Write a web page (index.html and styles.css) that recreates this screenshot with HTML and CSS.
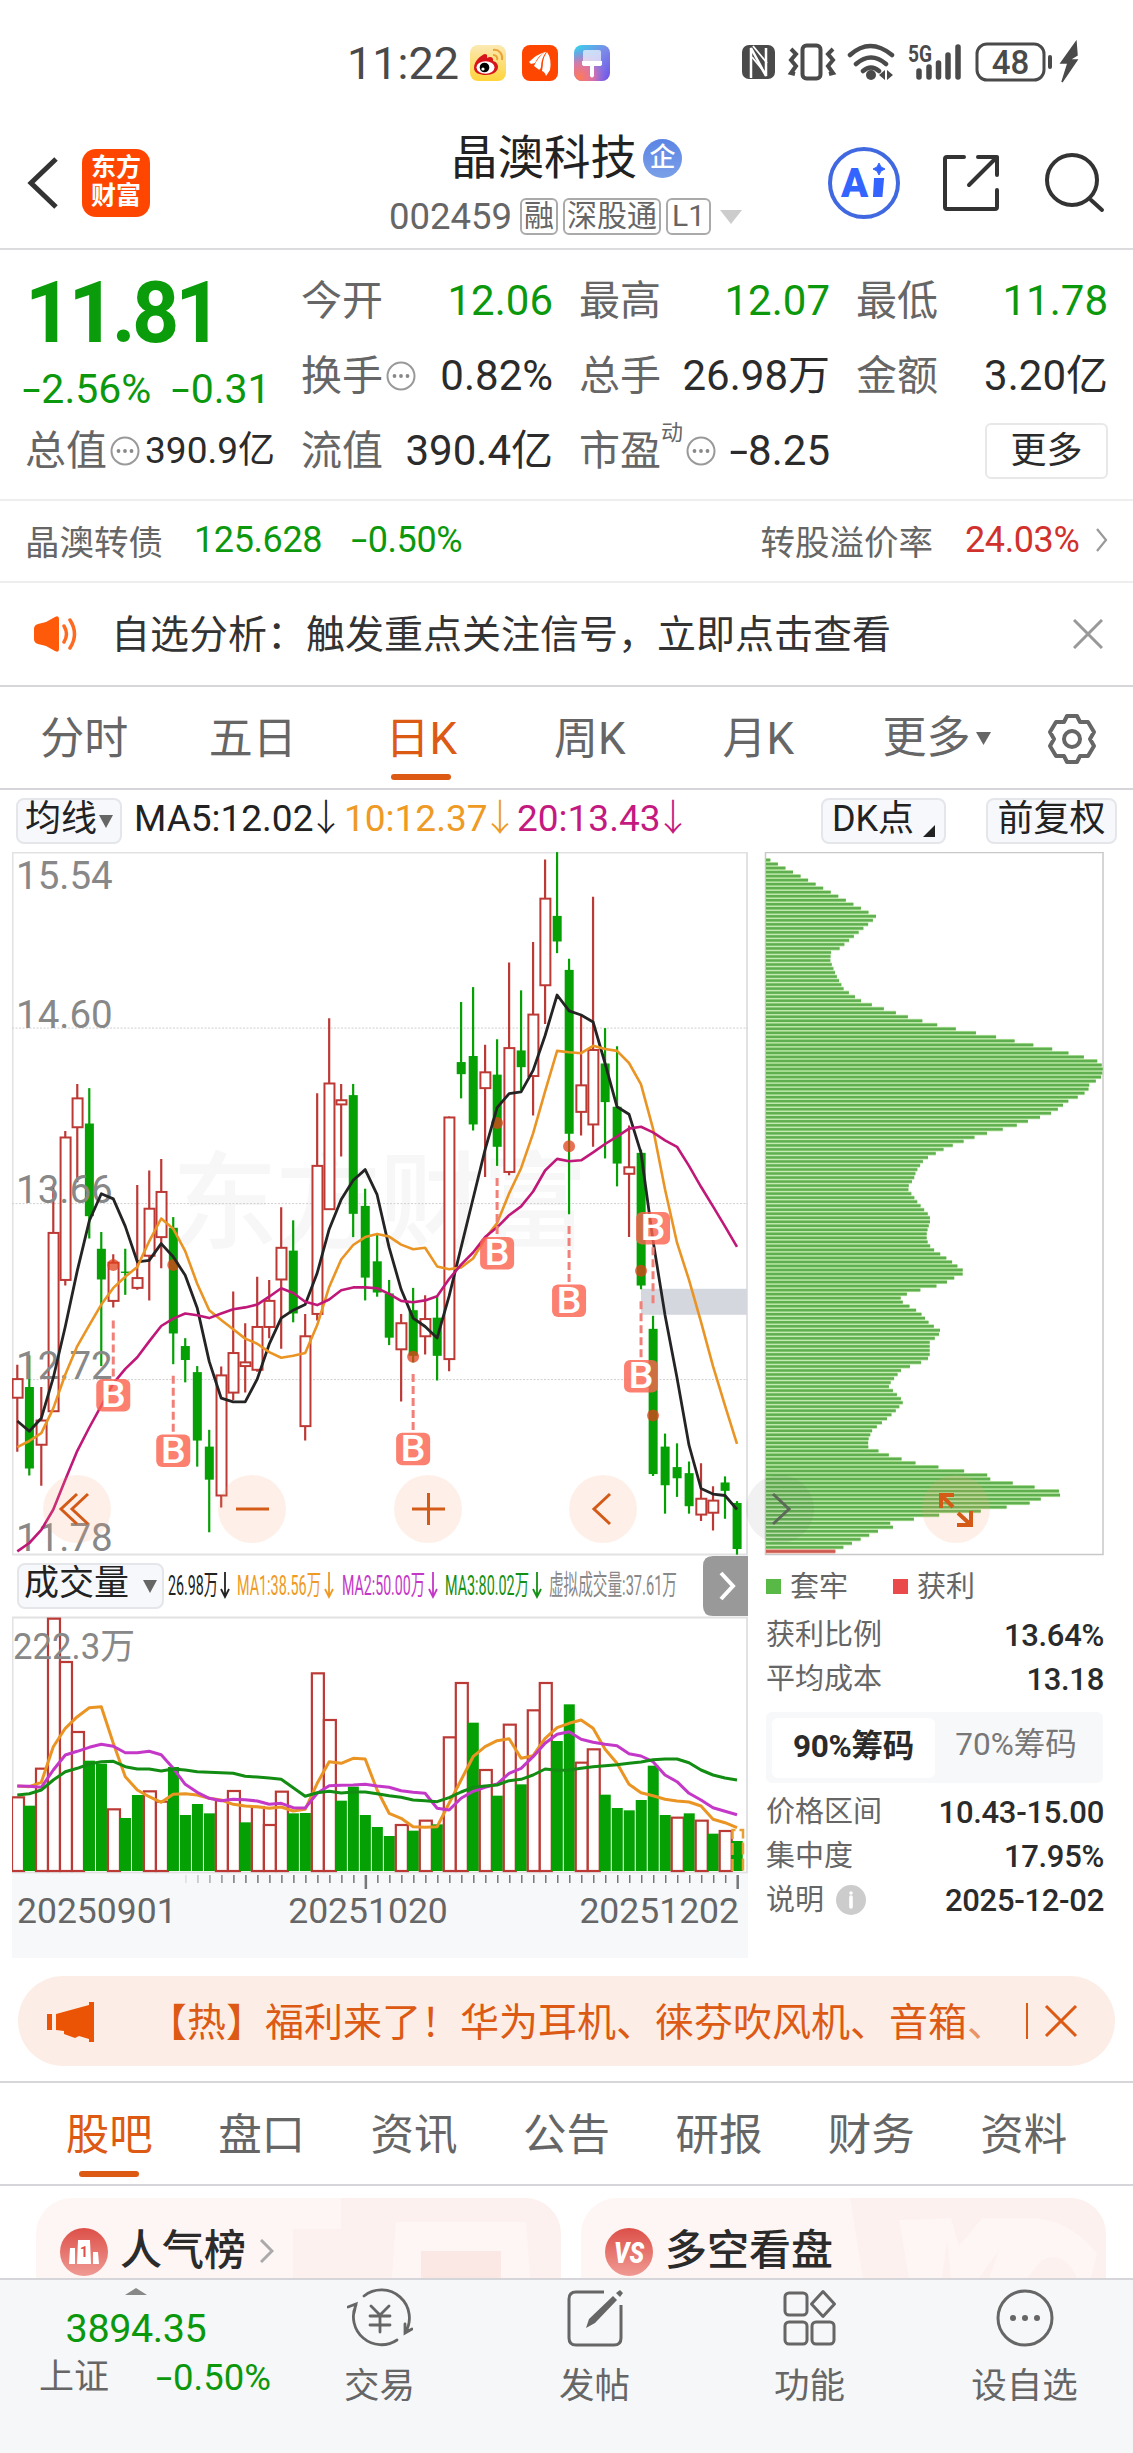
FILE: index.html
```html
<!DOCTYPE html>
<html lang="zh-CN">
<head>
<meta charset="utf-8">
<title>晶澳科技 002459</title>
<link rel="stylesheet" href="styles.css">
</head>
<body>
<div class="status">
  <span class="clock">11:22</span>
  <svg class="app" viewBox="0 0 36 36"><defs><linearGradient id="gy" x2="0" y2="1"><stop offset="0" stop-color="#fbe9b4"/><stop offset="1" stop-color="#ffd43a"/></linearGradient></defs><rect width="36" height="36" rx="8" fill="url(#gy)"/><path d="M4 23c0-7 7-13 11-14 3 0 2 3 2 4 3-2 7-1 6 3 4 1 5 4 5 6 0 5-6 8-12 8S4 28 4 23z" fill="#d8141b"/><ellipse cx="15.500" cy="22.500" rx="9" ry="6.200" fill="#fff"/><circle cx="14.500" cy="22.500" r="4.800"/><circle cx="13" cy="24" r="1.600" fill="#fff"/><path d="M23 5c6-1 10 4 9 10M23 10c3 0 5 2 4 5" fill="none" stroke="#e8a33d" stroke-width="2"/></svg>
  <svg class="app" viewBox="0 0 36 36"><rect width="36" height="36" rx="8" fill="#ff4600"/><path d="M7 17q8-8 16-10-7 4-10 11l-4 1zM12 21q4-9 11-14h1q-5 7-5 15-1 4-3 2zM20 26q1-5 1-9 1-6 4-10 5 7 3 18l-4 6q-1-4-4-5z" fill="#fff"/></svg>
  <svg class="app" viewBox="0 0 36 36"><defs><linearGradient id="gp" x2="1" y2="1"><stop offset="0" stop-color="#34d5ea"/><stop offset=".5" stop-color="#7b8be8"/><stop offset="1" stop-color="#6d4fe8"/></linearGradient><radialGradient id="go" cx=".15" cy=".9" r=".8"><stop offset="0" stop-color="#ff7a55"/><stop offset=".5" stop-color="#f0709a" stop-opacity=".8"/><stop offset="1" stop-color="#a070e0" stop-opacity="0"/></radialGradient></defs><rect width="36" height="36" rx="8" fill="url(#gp)"/><rect width="36" height="36" rx="8" fill="url(#go)"/><rect x="9" y="5" width="18" height="13" rx="2" fill="#fff" opacity=".65"/><path d="M8 16h20v3q0 2-3 2h-5v10q-2 3-4 0V21h-5q-3 0-3-2z" fill="#fff"/></svg>
  <svg class="sys" viewBox="0 0 346 44" fill="none" stroke="#4a4a4a">
    <rect x="1" y="5" width="33" height="34" rx="7" fill="#4a4a4a" stroke="none"/>
    <path d="M10 38V8l15 28V8" stroke="#fff" stroke-width="2.500"/><path d="M11 17l14 17M12 6l14 17" stroke="#fff" stroke-width="1.800"/>
    <rect x="61.500" y="5.500" width="18" height="33" rx="4" stroke-width="4"/>
    <path d="M50 9l5 5-5 6 5 6-5 7 4 1M92 9l-5 5 5 6-5 6 5 7-4 1" stroke-width="4"/>
    <path d="M109 15q20-18 42 0M115 24q15-13 30 0M122 31q8-7 16 0" stroke-width="4.500" stroke-linecap="round"/>
    <circle cx="130" cy="35" r="5" fill="#4a4a4a" stroke="none"/><path d="M138 35l6-5v10zM152 35l-6-5v10z" fill="#4a4a4a" stroke="none"/>
    <path d="M178 31v6M188 27v10M197.500 23v14M207 15v22M217 7v30" stroke-width="5.500" stroke-linecap="round"/>
    <text x="167" y="22" class="net" textLength="24" lengthAdjust="spacingAndGlyphs">5G</text>
    <rect x="236" y="4" width="67" height="36" rx="10" stroke-width="3"/><path d="M309 17v10" stroke-width="4" stroke-linecap="round"/>
    <text x="269.500" y="33.500" class="batt" text-anchor="middle">48</text>
    <path d="M335 2l-15 21h7l-6 19 15-22h-8l8-5z" fill="#4a4a4a" stroke="#4a4a4a" stroke-width="1.500"/>
  </svg>
</div>

<header class="head">
  <svg class="back" viewBox="0 0 36 60"><path d="M32 6L7 30l25 24" fill="none" stroke="#333" stroke-width="5"/></svg>
  <div class="logo">东方<br>财富</div>
  <div class="titles">
    <h1>晶澳科技<i>企</i></h1>
    <div class="codes"><span>002459</span><b>融</b><b>深股通</b><b>L1</b><svg viewBox="0 0 22 14"><path d="M0 0h22L11 14z" fill="#ccc"/></svg></div>
  </div>
  <svg class="tools" viewBox="0 0 280 80" fill="none" stroke="#333" stroke-width="4">
    <circle cx="36" cy="40" r="34" stroke="#4068e0"/>
    <text x="13" y="53.500" class="ai" textLength="28">A</text>
    <path d="M47 36h8l-1.500 17H46z" fill="#3464ff" stroke="#3464ff" stroke-width="2"/><path d="M51 20l2 4 4 2-4 2-2 4-2-4-4-2 4-2z" fill="#3464ff" stroke="#3464ff" stroke-width="1"/>
    <g stroke-linecap="round" stroke-linejoin="round"><path d="M136 14h-17q-2 0-2 2v48q0 2 2 2h48q2 0 2-2V47M150 14h19v18M169 14l-28 28"/>
    <circle cx="244" cy="37" r="25"/><path d="M263 57l11 10"/></g>
  </svg>
</header>

<section class="quote">
  <div class="price">11.81</div>
  <div class="chg"><span><i class="neg">-</i>2.56%</span><span><i class="neg">-</i>0.31</span></div>
  <div class="cell"><label>今开</label><b class="g">12.06</b></div>
  <div class="cell"><label>最高</label><b class="g">12.07</b></div>
  <div class="cell"><label>最低</label><b class="g">11.78</b></div>
  <div class="cell"><label>换手</label><svg class="q"><use href="#dots"/></svg><b>0.82%</b></div>
  <div class="cell"><label>总手</label><b>26.98万</b></div>
  <div class="cell"><label>金额</label><b>3.20亿</b></div>
  <div class="cell"><label>总值</label><svg class="q"><use href="#dots"/></svg><b class="sm">390.9亿</b></div>
  <div class="cell"><label>流值</label><b>390.4亿</b></div>
  <div class="cell"><label>市盈<sup>动</sup></label><svg class="q"><use href="#dots"/></svg><b><i class="neg">-</i>8.25</b></div>
  <div class="cell"><button class="more">更多</button></div>
</section>
<svg width="0" height="0" class="defs"><symbol id="dots" viewBox="0 0 30 30"><circle cx="15" cy="15" r="13.500" fill="none" stroke="#999" stroke-width="2"/><g fill="#888"><circle cx="8.500" cy="15" r="1.900"/><circle cx="15" cy="15" r="1.900"/><circle cx="21.500" cy="15" r="1.900"/></g></symbol></svg>

<section class="bond">
  <span class="name">晶澳转债</span><span class="g n1">125.628</span><span class="g n2"><i class="neg">-</i>0.50%</span>
  <span class="rate">转股溢价率</span><span class="red">24.03%</span>
  <svg viewBox="0 0 12 24"><path d="M1 1l9 11-9 11" fill="none" stroke="#999" stroke-width="2.200"/></svg>
</section>

<section class="notice">
  <svg class="spk" viewBox="0 0 46 36"><path d="M0 13q0-4 4-5l8-2L21 1q4-2 4 2v30q0 4-4 2l-9-5-8-2q-4-1-4-5z" fill="#ff5a0a"/><path d="M30 10q5 8 0 16M36 4q9 14 0 28" fill="none" stroke="#ff6a20" stroke-width="3.500" stroke-linecap="round"/></svg>
  <span>自选分析：触发重点关注信号，立即点击查看</span>
  <svg class="x" viewBox="0 0 30 30"><path d="M1 1l28 28M29 1L1 29" stroke="#999" stroke-width="3"/></svg>
</section>

<nav class="periods">
  <a>分时</a><a>五日</a><a class="on">日K</a><a>周K</a><a>月K</a>
  <a class="last">更多<svg viewBox="0 0 15 13"><path d="M0 0h15L7.500 13z" fill="#666"/></svg></a>
  <svg class="gear" viewBox="0 0 52 52" fill="none" stroke="#666" stroke-width="4" stroke-linejoin="round"><path d="M21 3h10l3 6 8 0 6 10-4 7 4 7-6 10-8 0-3 6H21l-3-6-8 0-6-10 4-7-4-7 6-10 8 0z"/><circle cx="26" cy="26" r="8"/></svg>
</nav>

<section class="mabar">
  <span class="btn ma">均线<svg viewBox="0 0 14 13"><path d="M0 0h14L7 13z" fill="#666"/></svg></span>
  <span class="m5">MA5:12.02<i>↓</i></span><span class="m10">10:12.37<i>↓</i></span><span class="m20">20:13.43<i>↓</i></span>
  <span class="btn dk">DK点<svg viewBox="0 0 12 12"><path d="M12 0v12H0z" fill="#222"/></svg></span>
  <span class="btn fq">前复权</span>
</section>

<main class="charts">
  <div class="left">
    <svg id="kline" width="736" height="704" viewBox="12 852 736 704"></svg>
    <div class="volhead">
      <span class="btn vol">成交量<svg viewBox="0 0 14 13"><path d="M0 0h14L7 13z" fill="#666"/></svg></span>
      <svg class="vma" width="530" height="60" viewBox="0 0 530 60">
        <text x="4" y="39" textLength="50" lengthAdjust="spacingAndGlyphs" fill="#222">26.98万</text>
        <text x="73" y="39" textLength="84" lengthAdjust="spacingAndGlyphs" fill="#ee9a25">MA1:38.56万</text>
        <text x="178" y="39" textLength="83" lengthAdjust="spacingAndGlyphs" fill="#c438c8">MA2:50.00万</text>
        <text x="281" y="39" textLength="84" lengthAdjust="spacingAndGlyphs" fill="#149014">MA3:80.02万</text>
        <text x="385" y="39" textLength="128" lengthAdjust="spacingAndGlyphs" fill="#888">虚拟成交量:37.61万</text>
        <g fill="none" stroke-width="1.800"><path d="M61 16v24m-4-7l4 8 4-8" stroke="#222"/><path d="M165 16v24m-4-7l4 8 4-8" stroke="#ee9a25"/><path d="M269 16v24m-4-7l4 8 4-8" stroke="#c438c8"/><path d="M373 16v24m-4-7l4 8 4-8" stroke="#149014"/></g>
      </svg>
      <svg class="next" viewBox="0 0 45 60"><path d="M10 0h35v60H10Q0 60 0 50V10Q0 0 10 0z" fill="#999"/><path d="M18 17l12 13-12 13" fill="none" stroke="#fff" stroke-width="4"/></svg>
    </div>
    <svg id="volume" width="736" height="258" viewBox="12 1616 736 258"></svg>
    <div class="axis">
      <svg id="ticks" width="736" height="16" viewBox="12 1874 736 16"></svg>
      <div class="dates"><span>20250901</span><span>20251020</span><span>20251202</span></div>
    </div>
  </div>
  <div class="right">
    <svg id="chips" width="340" height="704" viewBox="764 852 340 704"></svg>
    <div class="legend"><i class="lg"></i>套牢<i class="lr"></i>获利</div>
    <dl><dt>获利比例</dt><dd>13.64%</dd><dt>平均成本</dt><dd>13.18</dd></dl>
    <div class="seg"><b>90%筹码</b><span>70%筹码</span></div>
    <dl><dt>价格区间</dt><dd>10.43-15.00</dd><dt>集中度</dt><dd>17.95%</dd><dt>说明<svg viewBox="0 0 30 30"><circle cx="15" cy="15" r="15" fill="#ccc"/><path d="M15 12v10" stroke="#fff" stroke-width="3.600" stroke-linecap="round"/><circle cx="15" cy="8" r="1.800" fill="#fff"/></svg></dt><dd>2025-12-02</dd></dl>
  </div>
  <svg id="controls" width="960" height="72" viewBox="40 1473 960 72"></svg>
</main>

<section class="promo">
  <svg class="horn" viewBox="0 0 47 40" fill="#ea5404"><path d="M0 12h5v16H0zM9 12L42 3V0h5v40h-5v-3l-10-3-4 2-11-4v-3l-8-1z"/></svg>
  <span>【热】福利来了！华为耳机、徕芬吹风机、音箱<em>、</em></span>
  <svg class="px" viewBox="0 0 52 36"><path d="M1 0v36" stroke="#dc5a14" stroke-width="2"/><path d="M20 3l30 30M50 3L20 33" stroke="#dc5a14" stroke-width="3"/></svg>
</section>

<nav class="subtabs"><a class="on">股吧</a><a>盘口</a><a>资讯</a><a>公告</a><a>研报</a><a>财务</a><a>资料</a></nav>

<section class="cards">
  <div class="card">
    <svg class="deco" viewBox="0 0 525 80"><path d="M257 31h48V0h220v80H257z" fill="#fdf1ef"/><path d="M360 24h130l4 56H356z" fill="#fef6f4"/><path d="M385 53h80v27h-80z" fill="#fbe7e4"/></svg>
    <svg class="ic" viewBox="0 0 48 48"><defs><linearGradient id="gr" x2="0" y2="1"><stop stop-color="#dc5048"/><stop offset="1" stop-color="#f09a94"/></linearGradient></defs><circle cx="24" cy="24" r="24" fill="url(#gr)"/><path d="M10 20h5v16H9zM18 12h12l1 24H17zM33 24h5l1 12h-6z" fill="#fff"/><text x="24" y="29" text-anchor="middle" class="one">1</text></svg>
    <span>人气榜</span>
    <svg class="cv" viewBox="0 0 14 24"><path d="M1 1l11 11L1 23" fill="none" stroke="#aaa" stroke-width="3"/></svg>
  </div>
  <div class="card">
    <svg class="deco" viewBox="0 0 525 80"><path d="M269 0h256v80H282z" fill="#fdf1ef"/><path d="M318 22l52-2 8 28 23-28h55q38 6 60 36l-6 24h-14q-14-30-36-17l-14 17h-38l10-28-20 28h-28l-4-38-5 38h-33z" fill="#fef6f4"/></svg>
    <svg class="ic" viewBox="0 0 48 48"><circle cx="24" cy="24" r="24" fill="url(#gr)"/><text x="24" y="35" text-anchor="middle" class="vs" textLength="30" lengthAdjust="spacingAndGlyphs">VS</text></svg>
    <span>多空看盘</span>
  </div>
</section>

<footer class="dock">
  <div class="index"><svg viewBox="0 0 22 7"><path d="M11 0l11 7H0z" fill="#888"/></svg><strong>3894.35</strong><div><span>上证</span><em><i class="neg">-</i>0.50%</em></div></div>
  <div class="item"><svg viewBox="0 0 66 60" fill="none" stroke="#666" stroke-width="2.800" stroke-linecap="round"><path d="M17 8A28 28 0 0 1 58 45M50 52A28 28 0 0 1 9 17M1 19l8-3-2 9M58 36v9l7-4M24 18l9 9 9-9M33 27v17M23 28h20M23 37h20"/></svg><span>交易</span></div>
  <div class="item"><svg viewBox="0 0 66 60" fill="none" stroke="#666" stroke-width="3"><path d="M42 4H14q-7 0-7 7v39q0 7 7 7h38q7 0 7-7V17"/><path d="M24 40l3-9L51 8l4 4-22 23zM54 5l4-3 3 3-3 4z" fill="#666" stroke="none"/></svg><span>发帖</span></div>
  <div class="item"><svg viewBox="0 0 66 60" fill="none" stroke="#666" stroke-width="3"><rect x="8" y="5" width="22" height="22" rx="4"/><rect x="8" y="34" width="22" height="22" rx="4"/><rect x="35" y="34" width="22" height="22" rx="4"/><path d="M46 3.500l11.500 12.500L46 28.500 34.500 16z" stroke-linejoin="round"/></svg><span>功能</span></div>
  <div class="item"><svg viewBox="0 0 66 60" fill="none" stroke="#666" stroke-width="3"><circle cx="33" cy="30" r="27"/><g fill="#666" stroke="none"><circle cx="21" cy="30" r="3"/><circle cx="33" cy="30" r="3"/><circle cx="45" cy="30" r="3"/></g></svg><span>设自选</span></div>
</footer>
<script src="script.js"></script>
</body>
</html>
```
FILE: styles.css
```css
*{box-sizing:border-box}
body{margin:0;width:1133px;height:2453px;overflow:hidden;background:#fff;color:#333;font-family:Roboto,"Noto Sans CJK SC",sans-serif}
svg{display:block;flex:none}
.defs{position:absolute}
i,em{font-style:normal}
b,strong{font-weight:400}
.neg{display:inline-block;transform:scaleX(1.6);margin:0 4px 0 1px}
.g{color:#0c980c!important}
.red{color:#d0312d}

.status{height:125px;display:flex;align-items:flex-start;padding:45px 0 0 347px;color:#4a4a4a}
.clock{font-size:45px;line-height:38px;width:123px}
.app{width:36px;height:36px;margin-right:16px}
.sys{width:346px;height:44px;margin:-5px 0 0 115px}
.net{font-size:23px;font-weight:700;fill:#4a4a4a;stroke:none}
.batt{font-size:33px;font-weight:500;fill:#4a4a4a;stroke:none}

.head{height:125px;border-bottom:2px solid #dcdcde;display:flex;align-items:flex-start}
.back{width:36px;height:60px;margin:28px 0 0 24px}
.logo{width:68px;height:68px;margin:24px 0 0 22px;border-radius:14px;background:#ff4600;color:#fff;font-size:25px;line-height:28px;font-weight:700;text-align:center;padding-top:5px}
.titles{width:360px;margin-left:239px;display:flex;flex-direction:column}
h1{margin:8px 0 0 62px;font-size:46.500px;line-height:50px;font-weight:400;display:flex;align-items:center;color:#222}
h1 i{width:39px;height:39px;border-radius:50%;background:linear-gradient(#5b85e4,#7ba0e8);color:#fff;font-size:26px;line-height:37px;font-weight:500;text-align:center;margin-left:6px}
.codes{display:flex;align-items:center;height:37px;margin-top:15px;font-size:36.500px;color:#666}
.codes span{width:131px}
.codes b{border:2px solid #aaa;border-radius:6px;height:37px;line-height:32px;font-size:30px;padding:0 2px;margin-right:5px}
.codes b:nth-child(4){padding:0 4px}
.codes svg{width:22px;height:14px;margin-left:4px}
.tools{width:280px;height:80px;margin:18px 0 0 79px}
.ai{font-size:40px;font-weight:900;fill:#3464ff;stroke:none}

.quote{height:251px;border-bottom:2px solid #eee;padding:13px 24px 0 25px;display:grid;grid-template-columns:250px 252px 251px 252px;column-gap:26px;grid-template-rows:75px 75px 75px}
.price{grid-column:1;grid-row:1/3;font-size:85px;line-height:100px;font-weight:700;letter-spacing:-4px;color:#0a9c0a;transform:scaleX(.97);transform-origin:0 0}
.chg{grid-column:1;grid-row:2;display:flex;gap:23px;align-items:center;padding-top:27px;font-size:41px;line-height:48px;color:#0c980c;white-space:nowrap}
.cell{display:flex;align-items:center;font-size:42px;line-height:60px;color:#2b2b2b}
.cell label{font-size:41px;color:#666;white-space:nowrap}
.cell b{margin-left:auto}
.cell .sm{font-size:37px}
.q{width:30px;height:30px;margin-left:3px}
sup{font-size:22px;line-height:0;position:relative;top:-10px}
.more{margin:0 0 0 auto;width:123px;height:56px;border:2px solid #e8e8e8;border-radius:6px;background:#fff;font:36px/48px Roboto,"Noto Sans CJK SC",sans-serif;color:#2b2b2b;padding:0}

.bond{height:82px;border-bottom:2px solid #eee;display:flex;align-items:center;padding:0 25px 2px 25px;font-size:34.500px;color:#666;white-space:nowrap}
.bond .g,.bond .red{font-size:36px;letter-spacing:-.4px}
.n1{margin-left:31px}.n2{margin-left:31px}
.rate{margin-left:auto}
.bond .red{margin-left:32px;width:116px}
.bond svg{width:12px;height:24px;margin-left:15px}

.notice{height:104px;border-bottom:2px solid #d6d6da;display:flex;align-items:center;padding:0 30px 0 34px;font-size:39px;color:#333}
.spk{width:46px;height:36px}
.notice span{margin:-6px 0 0 31px}
.x{width:30px;height:30px;margin-left:auto}

.periods{height:103px;border-bottom:2px solid #d6d6da;display:flex;color:#666;font-size:44px;line-height:105px}
.periods a{width:168.500px;text-align:center;height:103px}
.on{color:#dc5a14}
.on::after{content:"";display:block;width:60px;height:6px;border-radius:3px;background:#dc5a14;margin:-18px auto 0}
.periods .last{width:170px;padding-left:40px;display:flex;align-items:center}
.last svg{width:15px;height:13px;margin-left:5px}
.gear{width:52px;height:52px;margin:26px 0 0 33px}

.mabar{height:62px;display:flex;align-items:center;font-size:37px;line-height:44px;white-space:nowrap;padding-left:16px}
.btn{display:flex;align-items:center;justify-content:center;height:46px;border:2px solid #e4e6ea;border-radius:8px;background:#f7f8fb;color:#222;font-size:36px;line-height:40px;padding-bottom:4px}
.btn.ma{width:106px}
.btn svg{width:14px;height:13px;margin:4px 0 0 2px}
.mabar i{display:inline-block;width:22px;text-indent:-6px;font-family:"Noto Sans CJK SC",sans-serif;font-weight:300;line-height:40px}
.m5,.m10,.m20{margin-top:-7px}
.m5{color:#222;width:210px;margin-left:12px}
.m10{color:#ee9a25;width:173px}
.m20{color:#c41a80;width:304px}
.dk{width:125px}
.dk svg{width:12px;height:12px;margin:24px 0 0 9px}
.fq{width:131px;margin-left:40px}

.charts{position:relative;height:1108px;display:flex;gap:16px;padding-left:12px}
.left{width:736px}
.volhead{height:60px;display:flex;align-items:center;padding-left:5px}
.vol{width:147px;font-size:35px}
.vol svg{margin-left:14px}
.vma{font-size:28px;margin-right:9px}
.next{width:45px;height:60px}
.axis{height:84px;background:#f7f8fa}
.dates{display:flex;justify-content:space-between;padding:0 9px 0 5px;font-size:35.500px;line-height:42px;color:#666}
.dates span:nth-child(2){margin-right:20px}
#controls{position:absolute;left:40px;top:621px}
.plabel{font-size:38.500px;fill:#888}
.vlabel{font-size:36px;fill:#888}
.wm{font-size:106px;font-weight:500;fill:#f7f7f8}
.bm{font-size:36px;font-weight:500;fill:#fff}

.right{width:340px}
.legend{height:60px;display:flex;align-items:center;font-size:29px;color:#666;padding:0 0 4px 2px}
.legend i{width:15px;height:15px;margin-right:9px;margin-top:4px}
.lg{background:#58b947}.lr{background:#ea4a4a;margin-left:45px}
dl{margin:-3px 0 0;padding:0 0 0 2px;display:grid;grid-template-columns:auto auto;grid-auto-rows:44px;align-items:center;font-size:29px;color:#666;line-height:44px}
dt{display:flex;align-items:center}
dt svg{width:30px;height:30px;margin-left:12px}
dd{margin:2px 0 0;text-align:right;font-size:31px;font-weight:500;color:#2b2b2b;letter-spacing:-.3px}
.seg{margin:11px 0 10px 2px;width:337px;height:71px;border-radius:6px;background:#f7f8fa;display:flex;align-items:center;padding:6px;font-size:31.500px;color:#777}
.seg b{width:163px;height:60px;line-height:57px;background:#fff;border-radius:6px;text-align:center;color:#2b2b2b;font-weight:700;font-size:31.500px;letter-spacing:-.3px}
.seg span{flex:1;text-align:center;line-height:50px;margin-top:-6px}

.promo{margin:16px 18px 0;height:90px;border-radius:45px;background:#fceee6;display:flex;align-items:center;padding-left:29px;font-size:39px;color:#dc5a14}
.horn{width:47px;height:40px;margin-top:2px}
.promo span{margin:-5px 0 0 54px;width:878px;white-space:nowrap}
.promo em{opacity:.6}
.px{width:52px;height:36px}

.subtabs{margin-top:15px;height:105px;border:solid #d6d6da;border-width:2px 0;display:flex;padding:0 33px;font-size:43.500px;line-height:106px;color:#666}
.subtabs a{width:152.500px;text-align:center}

.cards{height:92px;padding:12px 27px 0 36px;display:flex;gap:20px;overflow:hidden}
.card{position:relative;width:525px;height:140px;border-radius:36px;background:#fef6f4;overflow:hidden;display:flex;align-items:flex-start;font-size:42px;color:#2b2b2b;font-weight:500}
.deco{position:absolute;left:0;top:0;width:525px;height:80px}
.ic{position:relative;width:48px;height:48px;margin:30px 0 0 24px}
.card span{position:relative;margin:23px 0 0 12px;line-height:60px}
.cv{position:relative;width:14px;height:24px;margin:41px 0 0 14px}
.one{font-size:14px;font-weight:700;fill:#dc5048}
.vs{font-size:30px;font-weight:900;font-style:italic;fill:#fff}

.dock{height:175px;background:#f6f7f9;border-top:2px solid #d6d6da;display:flex}
.index{width:272px;display:flex;flex-direction:column;align-items:center;padding-top:8px}
.index svg{width:22px;height:7px}
.index strong{font-size:39.500px;line-height:48px;color:#0c980c;margin-top:10px;letter-spacing:-.4px}
.index div{display:flex;align-items:center;width:232px;justify-content:space-between;font-size:35px;line-height:50px;color:#666;margin-left:38px}
.index em{font-size:36.500px;color:#0c980c}
.item{width:215px;display:flex;flex-direction:column;align-items:center;font-size:35.500px;line-height:44px;color:#666;padding-top:8px}
.item svg{width:66px;height:60px;margin-bottom:16px}
```
FILE: script.js
```js
// Candle rows: wick top, body top, body bottom, wick bottom, rising flag.
const K = `1127,1158,1198,1314,1|1107,1175,1350,1365,0|1175,1247,1299,1387,1|740,844,1227,1227,1|625,639,945,957,1|524,555,617,735,1|533,609,808,856,0|842,878,944,1130,0|890,908,990,1004,1|878,927,930,977,0|741,941,962,966,1|710,792,893,989,1|685,756,853,920,1|810,833,1060,1126,0|1070,1087,1117,1165,0|1130,1143,1290,1346,0|1267,1303,1374,1487,0|1131,1150,1408,1434,1|970,1102,1187,1203,1|1038,1122,1130,1187,1|938,1046,1138,1142,1|945,990,1046,1070,1|789,876,944,1093,1|817,882,1017,1036,0|1018,1066,1259,1290,1|544,700,1018,1032,1|383,523,793,795,1|524,559,568,680,1|524,548,803,853,0|749,786,940,989,0|848,905,972,981,0|945,974,1069,1085,0|1018,1038,1094,1206,1|962,1010,1108,1122,0|978,1029,1066,1105,1|980,1026,1108,1161,0|594,596,1115,1141,1|348,477,503,555,0|316,464,611,624,0|440,499,533,724,1|428,504,659,700,0|263,447,713,720,1|323,452,488,538,0|219,375,507,592,1|42,126,312,395,1|26,163,218,243,0|255,279,631,804,0|377,527,584,635,1|122,451,611,659,1|404,480,563,684,0|443,573,695,744,0|613,703,717,853,1|665,672,957,965,0|1022,1050,1362,1366,0|1275,1303,1386,1447,0|1296,1347,1371,1411,0|1335,1360,1431,1447,0|1339,1415,1449,1463,1|1388,1419,1445,1483,1|1367,1380,1398,1458,0|1420,1424,1523,1535,0`.split('|').map(r => r.split(',').map(Number));
const MA5 = [1248,1270,1242,1155,1045,925,818,760,771,830,906,903,867,895,935,1005,1120,1199,1207,1207,1158,1083,1027,1010,998,930,836,772,731,708,762,875,965,1027,1045,1070,980,875,770,665,575,545,541,495,420,333,367,376,391,480,573,589,672,860,1020,1155,1300,1393,1405,1408,1438];
const MA10 = [1304,1291,1274,1221,1148,1087,1042,998,962,938,917,862,813,835,883,953,1010,1031,1051,1071,1082,1100,1112,1108,1102,1042,960,901,870,853,846,852,869,879,876,916,922,918,899,856,823,759,705,630,540,453,456,458,442,449,453,479,525,620,750,865,945,1035,1130,1215,1297];
const MA20 = [1528,1510,1482,1438,1374,1312,1262,1215,1167,1136,1111,1077,1044,1028,1017,1021,1027,1017,1008,1004,998,981,963,973,992,999,987,967,961,961,963,975,990,993,989,980,943,912,886,853,832,806,787,755,710,685,690,688,671,653,637,620,616,628,645,659,700,745,787,830,874];
const V = '739r 767g 653r 203r 333r 543r 632g 641g 775r 804g 735g 721r 752r 651g 795g 762g 790g 748r 720r 817g 768r 822r 722r 790g 789g 367r 507r 752g 710g 795g 831g 858g 822r 842g 809r 823g 559r 396r 518g 657r 737g 521r 703g 478r 396r 573g 463g 635r 595r 734g 774g 781g 750g 647g 795g 800r 790g 809r 851g 840r 873g'.split(' ');
const V1 = [708,710,697,590,535,500,473,470,580,680,720,740,757,733,731,735,745,750,763,768,770,775,771,783,778,700,635,640,625,627,720,790,805,830,832,830,760,690,620,590,572,566,625,617,565,533,520,510,535,598,640,703,728,737,748,753,756,768,808,818,833];
const V2 = [708,709,712,660,615,604,592,583,589,608,608,604,614,655,703,727,745,752,748,749,753,763,760,773,774,730,707,706,705,703,708,712,722,727,730,775,780,745,724,712,702,670,655,620,580,553,545,568,577,583,587,611,618,635,675,695,730,750,773,784,794];
const V3 = [735,731,720,690,665,655,642,635,634,650,657,657,663,657,660,665,667,668,670,679,681,684,688,713,739,728,724,729,726,726,731,737,742,750,752,755,743,726,712,708,705,692,688,675,657,661,660,655,650,647,644,640,636,629,627,627,638,660,675,684,690];
// Chip curve: level, length pairs, interpolated for every price step.
const C = [43,91,165,411,234,297,242,272,260,271,290,288,321,312,347,367,381,509,399,602,407,657,425,783,433,833,451,951,468,1042,477,1082,485,1086,494,1089,503,1086,512,1082,520,1062,529,1042,538,1047,555,1007,564,974,573,966,590,926,599,884,616,818,633,725,660,623,686,553,712,528,729,521,747,501,781,536,805,566,815,572,843,560,860,560,877,575,903,630,929,678,938,650,955,607,972,512,981,482,990,482,1015,540,1042,573,1050,600,1059,600,1068,590,1077,569,1111,569,1120,552,1137,486,1172,444,1206,491,1224,470,1242,443,1268,397,1285,386,1303,383,1320,443,1337,518,1346,589,1363,741,1372,746,1380,809,1389,876,1398,956,1406,968,1415,905,1424,872,1433,800,1441,732,1450,600,1459,521,1467,450,1476,460,1485,413,1519,311,1528,286];

const GREEN = '#04a004', RED = '#bc3a36';
const x = i => 17.3 + i * 11.995;
const y = v => 840 + v / 2.148;
const vy = v => 1550 + v / 3;
const line = (a, f, c, w) => `<polyline fill="none" stroke="${c}" stroke-width="${w}" stroke-linejoin="round" points="${a.map((v, i) => x(i).toFixed(1) + ',' + f(v).toFixed(1)).join(' ')}"/>`;

let k = '<rect x="12.500" y="852.500" width="734.500" height="702" fill="#fff" stroke="#e2e2e4" stroke-width="2"/>';
k += '<text class="wm" x="172" y="1240" textLength="416">东方财富</text>';
[404, 781, 1159].forEach(v => k += `<path d="M12 ${y(v)}H748" stroke="#d0d0d0" stroke-width="1" stroke-dasharray="2 1.500"/>`);
k += `<rect x="641" y="${y(964)}" width="106" height="26" fill="#d4d7dd"/>`;
K.forEach(([h, a, b, l, up], i) => {
  const c = up ? RED : GREEN, X = x(i);
  if (up) {
    k += `<path d="M${X} ${y(h)}V${y(a)}M${X} ${y(b)}V${y(l)}" stroke="${c}" stroke-width="2.200"/>`;
    k += `<rect x="${X - 4.7}" y="${y(a)}" width="10" height="${Math.max(2, y(b) - y(a))}" fill="#fff" stroke="${c}" stroke-width="2"/>`;
  } else {
    k += `<path d="M${X} ${y(h)}V${y(l)}" stroke="${c}" stroke-width="2.200"/><rect x="${X - 4.4}" y="${y(a)}" width="9" height="${Math.max(1, y(b) - y(a))}" fill="${c}"/>`;
  }
});
const marks = [[8,913,1032,1158],[13,913,1151,1277],[33,1110,1147,1273],[40,608,726,853],[46,658,829,955],[52,925,991,1117],[53,1236,875,799]];
marks.forEach(m => k += `<ellipse cx="${x(m[0])}" cy="${y(m[1])}" rx="6" ry="6" fill="#e0401c" fill-opacity=".75"/>`);
k += ['15.54,889', '14.60,1028', '13.66,1203', '12.72,1379', '11.78,1551'].map(s => { const [t, v] = s.split(','); return `<text class="plabel" x="16" y="${v}">${t}</text>`; }).join('');
k += line(MA5, y, '#242424', 2.8) + line(MA10, y, '#ea9424', 2.6) + line(MA20, y, '#c01878', 2.6);
marks.forEach(([i, , d, b]) => {
  k += `<path d="M${x(i)} ${y(d)}v56" stroke="#f08078" stroke-width="3" stroke-dasharray="8 4"/>`;
  k += `<rect x="${x(i) - 17}" y="${y(b)}" width="34" height="32.500" rx="6" fill="#fa6450" fill-opacity=".82"/><text class="bm" x="${x(i)}" y="${y(b) + 28}" text-anchor="middle" textLength="25" lengthAdjust="spacingAndGlyphs">B</text>`;
});
document.getElementById('kline').innerHTML = k;

let v = '<rect x="12.500" y="1617.500" width="734.500" height="255" fill="#fff" stroke="#e2e2e4" stroke-width="2"/>';
V.forEach((s, i) => {
  const t = vy(parseInt(s)), X = x(i);
  v += s.endsWith('r')
    ? `<rect x="${X - 5.3}" y="${t + 1}" width="12" height="${1870 - t}" fill="#fff" stroke="${RED}" stroke-width="2.200"/>`
    : `<rect x="${X - 5.3}" y="${t}" width="11" height="${1871 - t}" fill="${GREEN}"/>`;
});
v += '<path d="M732.500 1871V1830H743V1871" fill="none" stroke="#e8a030" stroke-width="2.500" stroke-dasharray="12 4"/>';
v += '<text class="vlabel" x="13" y="1659" textLength="122" lengthAdjust="spacingAndGlyphs">222.3万</text>';
v += line(V1, vy, '#ea9424', 3) + line(V2, vy, '#c438c8', 3) + line(V3, vy, '#128c12', 3);
document.getElementById('volume').innerHTML = v;

let t = '';
for (let i = 14; i < 61; i++) {
  const big = i === 29 || i === 60;
  t += `<path d="M${x(i) + 0.7} 1875v${big ? 14 : 8}" stroke="#777" stroke-width="${big ? 2.5 : 1.5}" opacity="${Math.min(1, (i - 13) / 5)}"/>`;
}
document.getElementById('ticks').innerHTML = t;

let c = '<rect x="765.500" y="852.500" width="337.500" height="702" fill="#fff" stroke="#c8c8c8" stroke-width="1.500"/>';
for (let n = 0, j = 0; n < 173; n++) {
  const lv = 43 + n * (1485 / 172);
  while (j < C.length - 4 && C[j + 2] < lv) j += 2;
  const len = (C[j + 1] + (C[j + 3] - C[j + 1]) * (lv - C[j]) / (C[j + 2] - C[j]) - 78) / 3;
  const last = n === 172, Y = y(lv);
  c += `<rect x="766" y="${Y - 2}" width="${len}" height="4" fill="${last ? '#e89080' : '#b2e49c'}"/><rect x="766" y="${Y - 1.2}" width="${len}" height="2.400" fill="${last ? '#cc5a50' : '#5fae50'}"/>`;
}
document.getElementById('chips').innerHTML = c;

const o = '#d45a18';
let b = [77, 252, 428, 603, 956].map(X => `<circle cx="${X}" cy="1509" r="34" fill="#f8a070" fill-opacity=".16"/>`).join('');
b += '<circle cx="780" cy="1509" r="34" fill="#666" fill-opacity=".09"/>';
b += `<g fill="none" stroke="${o}" stroke-width="3"><path d="M77 1494l-16 15 16 15M88 1494l-16 15 16 15M236 1509h33M412 1509h33M428.500 1493v32M610 1494l-16 15 16 15"/><path d="M773 1494l16 15-16 15" stroke="#5c6a58"/><path d="M941 1508v-13h13M941 1495l12 12M971 1511v14h-14M971 1525l-13-12" stroke-width="4"/></g>`;
document.getElementById('controls').innerHTML = b;
```
